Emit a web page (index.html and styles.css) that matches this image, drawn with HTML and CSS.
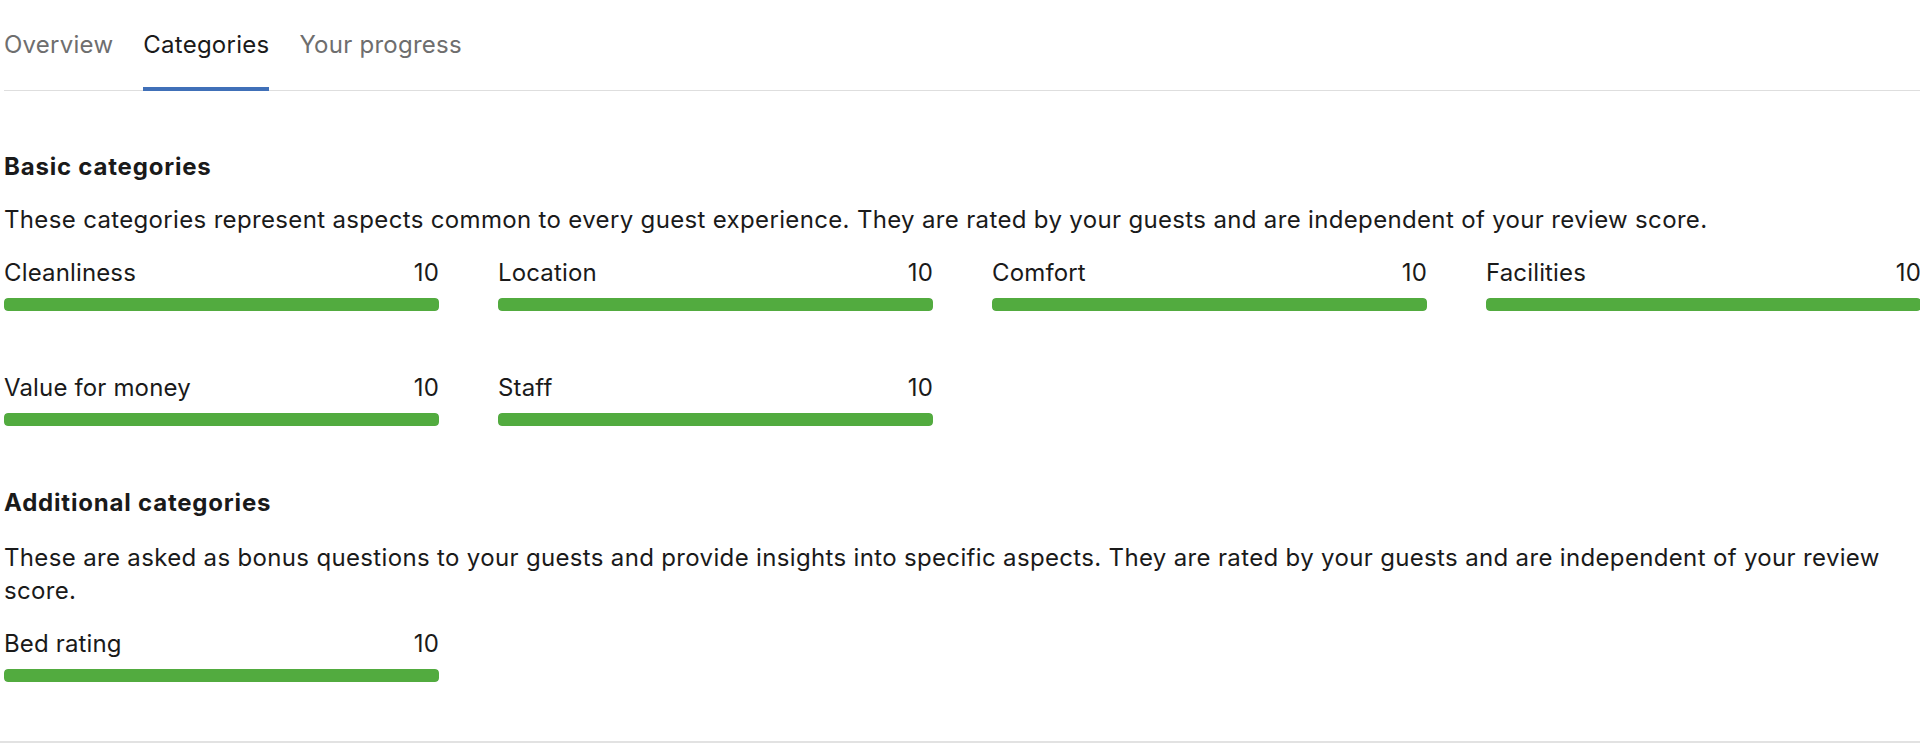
FILE: index.html
```html
<!DOCTYPE html>
<html lang="en">
<head>
    <meta charset="UTF-8">
    <meta name="viewport" content="width=device-width, initial-scale=1.0">
    <title>Categories</title>
    <link rel="stylesheet" href="styles.css">
</head>
<body>
    <div class="page">
        <nav class="tabs">
            <a class="tab" href="#">Overview</a>
            <a class="tab active" href="#">Categories</a>
            <a class="tab" href="#">Your progress</a>
        </nav>

        <section class="group first">
            <h2>Basic categories</h2>
            <p>These categories represent aspects common to every guest experience. They are rated by your guests and are independent of your review score.</p>
            <div class="scores">
                <div class="score">
                    <div class="score-head"><span>Cleanliness</span><span>10</span></div>
                    <div class="bar"><div class="bar-fill" style="width: 100%"></div></div>
                </div>
                <div class="score">
                    <div class="score-head"><span>Location</span><span>10</span></div>
                    <div class="bar"><div class="bar-fill" style="width: 100%"></div></div>
                </div>
                <div class="score">
                    <div class="score-head"><span>Comfort</span><span>10</span></div>
                    <div class="bar"><div class="bar-fill" style="width: 100%"></div></div>
                </div>
                <div class="score">
                    <div class="score-head"><span>Facilities</span><span>10</span></div>
                    <div class="bar"><div class="bar-fill" style="width: 100%"></div></div>
                </div>
                <div class="score">
                    <div class="score-head"><span>Value for money</span><span>10</span></div>
                    <div class="bar"><div class="bar-fill" style="width: 100%"></div></div>
                </div>
                <div class="score">
                    <div class="score-head"><span>Staff</span><span>10</span></div>
                    <div class="bar"><div class="bar-fill" style="width: 100%"></div></div>
                </div>
            </div>
        </section>

        <section class="group last">
            <h2>Additional categories</h2>
            <p class="wide">These are asked as bonus questions to your guests and provide insights into specific aspects. They are rated by your guests and are independent of your review score.</p>
            <div class="scores">
                <div class="score">
                    <div class="score-head"><span>Bed rating</span><span>10</span></div>
                    <div class="bar"><div class="bar-fill" style="width: 100%"></div></div>
                </div>
            </div>
        </section>
    </div>
</body>
</html>
```

FILE: styles.css
```css
* {
    box-sizing: border-box;
    margin: 0;
    padding: 0;
}

html, body {
    overflow: hidden;
}

body {
    font-family: Inter, "Noto Sans", sans-serif;
    font-size: 24px;
    line-height: 32px;
    color: #1a1a1a;
    background-color: #fff;
}

.page {
    width: 1921px;
    padding-left: 4px;
}

.tabs {
    display: flex;
    gap: 30px;
    height: 91px;
    border-bottom: 1px solid #dedede;
}

.tab {
    display: block;
    padding: 29px 0 26px;
    margin-bottom: -1px;
    border-bottom: 4px solid transparent;
    color: #6e6e6e;
    text-decoration: none;
    letter-spacing: 0.25px;
}

.tab.active {
    color: #1a1a1a;
    border-bottom-color: #4070b8;
}

.group.first {
    margin-top: 60px;
}

.group.last {
    margin-top: 61px;
    padding-bottom: 59px;
    border-bottom: 2px solid #e2e2e2;
    margin-left: -4px;
    padding-left: 4px;
}

h2 {
    font-size: 24px;
    font-weight: 700;
    letter-spacing: 0.8px;
}

.group p {
    margin-top: 20px;
    line-height: 33px;
    letter-spacing: 0.34px;
}

.group p.wide {
    margin-top: 22px;
}

.scores {
    display: grid;
    grid-template-columns: repeat(4, 435px);
    column-gap: 59px;
    row-gap: 61px;
    margin-top: 21px;
}

.score-head {
    display: flex;
    justify-content: space-between;
    letter-spacing: 0.15px;
}

.bar {
    height: 13px;
    margin-top: 9px;
    border-radius: 4px;
    background-color: #e6e6e6;
    overflow: hidden;
}

.bar-fill {
    height: 100%;
    background-color: #52ab3f;
    border-radius: 4px;
}
```
